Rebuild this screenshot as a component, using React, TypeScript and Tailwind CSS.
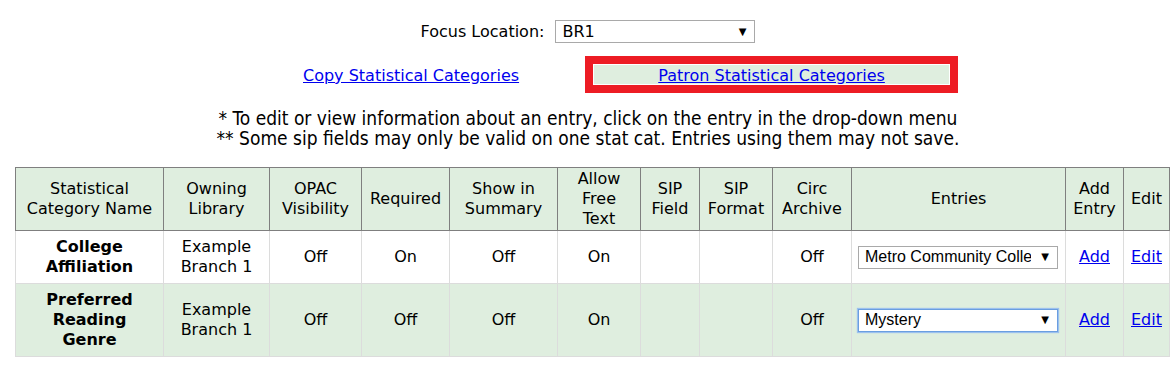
const verdana = "font-['DejaVu_Sans',Verdana,sans-serif]";

type Row = {
  name: string[];
  library: string[];
  opac: string;
  required: string;
  summary: string;
  freeText: string;
  entry: string;
  focused?: boolean;
  green?: boolean;
};

const rows: Row[] = [
  {
    name: ["College", "Affiliation"],
    library: ["Example", "Branch 1"],
    opac: "Off",
    required: "On",
    summary: "Off",
    freeText: "On",
    entry: "Metro Community College",
  },
  {
    name: ["Preferred", "Reading", "Genre"],
    library: ["Example", "Branch 1"],
    opac: "Off",
    required: "Off",
    summary: "Off",
    freeText: "On",
    entry: "Mystery",
    focused: true,
    green: true,
  },
];

const headers: { label: string[]; w: string }[] = [
  { label: ["Statistical", "Category Name"], w: "w-[148px]" },
  { label: ["Owning", "Library"], w: "w-[106px]" },
  { label: ["OPAC", "Visibility"], w: "w-[92px]" },
  { label: ["Required"], w: "w-[88px]" },
  { label: ["Show in", "Summary"], w: "w-[108px]" },
  { label: ["Allow", "Free", "Text"], w: "w-[83px]" },
  { label: ["SIP", "Field"], w: "w-[59px]" },
  { label: ["SIP", "Format"], w: "w-[73px]" },
  { label: ["Circ", "Archive"], w: "w-[79px]" },
  { label: ["Entries"], w: "w-[214px]" },
  { label: ["Add", "Entry"], w: "w-[58px]" },
  { label: ["Edit"], w: "w-[46px]" },
];

function FakeSelect({
  value,
  focused,
  arial,
}: {
  value: string;
  focused?: boolean;
  arial?: boolean;
}) {
  return (
    <div
      className={`flex h-[23px] w-[200px] items-center bg-white pl-[6px] pr-[8px] text-left ${
        focused
          ? "border border-[#6a9ee0] shadow-[0_0_1px_1px_#9cc0ee]"
          : "border border-[#a9a9a9]"
      }`}
    >
      <div className="w-[166px] overflow-hidden">
        <span
          className={`block w-max text-[16px] leading-[20px] text-black ${
            arial ? "font-['Liberation_Sans',Arial,sans-serif]" : verdana
          }`}
        >
          {value}
        </span>
      </div>
      <span className="ml-auto text-[10px] leading-none text-black">▼</span>
    </div>
  );
}

function Lines({ lines }: { lines: string[] }) {
  return (
    <>
      {lines.map((l) => (
        <div key={l}>{l}</div>
      ))}
    </>
  );
}

export default function App() {
  return (
    <div className={`min-h-[367px] w-[1176px] bg-white text-black ${verdana} text-[16px]`}>
      <div className="flex items-center justify-center gap-[11px] pt-[20px]">
        <span className="leading-[23px]">Focus Location:</span>
        <FakeSelect value="BR1" />
      </div>

      <div className="mt-[13px] flex items-center gap-[66px] pl-[303px]">
        <a href="#" className="mt-[3px] text-[#0000ee] underline">
          Copy Statistical Categories
        </a>
        <div className="h-[37px] w-[373px] border-[8px] border-[#ed1c24] bg-white p-px">
          <div className="flex h-full items-center justify-center bg-[#dfeedf] pt-[2px]">
            <a href="#" className="text-[#0000ee] underline">
              Patron Statistical Categories
            </a>
          </div>
        </div>
      </div>

      <div className="mt-[15px] text-center font-['DejaVu_Sans_Condensed','DejaVu_Sans',sans-serif] text-[19px] leading-[20px] [font-stretch:condensed]">
        <div>* To edit or view information about an entry, click on the entry in the drop-down menu</div>
        <div>** Some sip fields may only be valid on one stat cat. Entries using them may not save.</div>
      </div>

      <div className="pl-[15px] pt-[19px]">
        <table className="table-fixed border-collapse text-center">
          <colgroup>
            {headers.map((h, i) => (
              <col key={i} className={h.w} />
            ))}
          </colgroup>
          <thead>
            <tr className="bg-[#dfeedf]">
              {headers.map((h, i) => (
                <th
                  key={i}
                  className="h-[62px] border border-[#7f7f7f] px-1 py-px align-middle font-normal leading-[20px]"
                >
                  <Lines lines={h.label} />
                </th>
              ))}
            </tr>
          </thead>
          <tbody>
            {rows.map((r, i) => (
              <tr key={i} className={r.green ? "bg-[#dfeedf]" : "bg-white"}>
                <td className="border border-[#dcdcdc] px-1 py-[6px] align-middle font-bold leading-[20px]">
                  <Lines lines={r.name} />
                </td>
                <td className="border border-[#dcdcdc] px-1 py-[6px] leading-[20px]">
                  <Lines lines={r.library} />
                </td>
                <td className="border border-[#dcdcdc] leading-[20px]">{r.opac}</td>
                <td className="border border-[#dcdcdc] leading-[20px]">{r.required}</td>
                <td className="border border-[#dcdcdc] leading-[20px]">{r.summary}</td>
                <td className="border border-[#dcdcdc] leading-[20px]">{r.freeText}</td>
                <td className="border border-[#dcdcdc]" />
                <td className="border border-[#dcdcdc]" />
                <td className="border border-[#dcdcdc] leading-[20px]">Off</td>
                <td className="border border-[#dcdcdc] px-[6px]">
                  <FakeSelect value={r.entry} focused={r.focused} arial />
                </td>
                <td className="border border-[#dcdcdc] leading-[20px]">
                  <a href="#" className="text-[#0000ee] underline">
                    Add
                  </a>
                </td>
                <td className="border border-[#dcdcdc] leading-[20px]">
                  <a href="#" className="text-[#0000ee] underline">
                    Edit
                  </a>
                </td>
              </tr>
            ))}
          </tbody>
        </table>
      </div>
    </div>
  );
}
